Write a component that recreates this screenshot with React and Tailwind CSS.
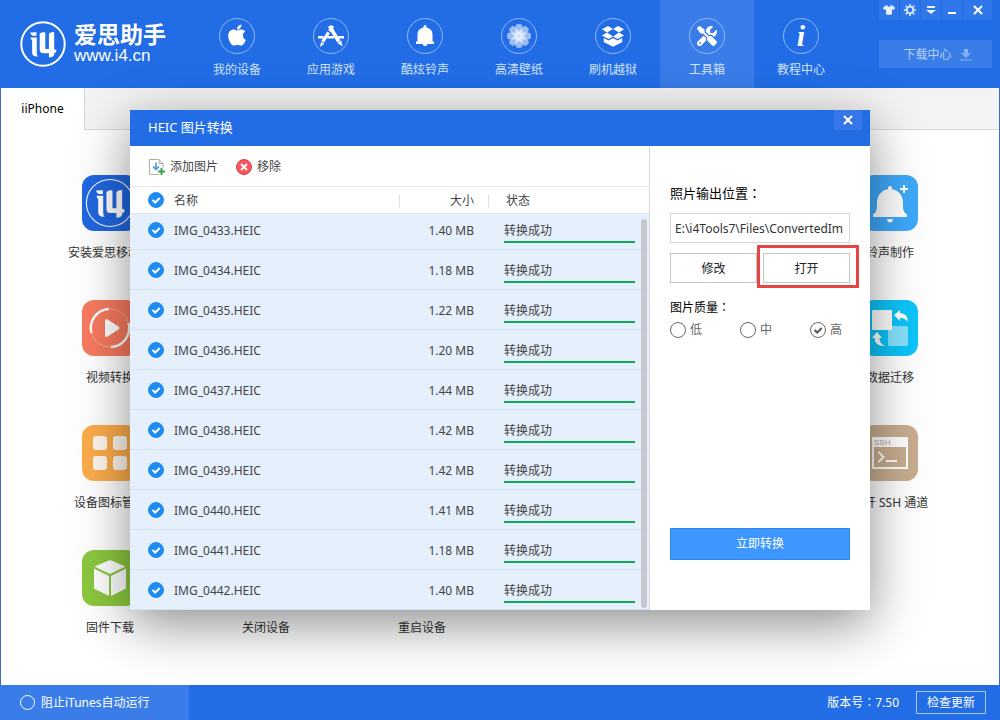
import React from "react";
import { FaApple } from "react-icons/fa";
import { FaScrewdriverWrench, FaShirt } from "react-icons/fa6";

function I4Logo({ className, ring = 6 }) {
  return (
    <svg viewBox="59 62 140 140" className={className} fill="#fff" aria-hidden="true">
      <circle cx="129" cy="132" r="66" fill="none" stroke="#fff" strokeWidth={ring} />
      <path d="M90 97L109 96V107H98Q91 104 90 97Z" />
      <path d="M91 112H110V160Q110 166 114 170Q96 172 96 157V121Q92 118 91 112Z" />
      <path d="M119 101Q125 95 136 97V147H147V101Q152 95 163 96V148L170 150L168 159H163V165Q160 173 147 173V160H130Q119 160 119 148Z" />
    </svg>
  );
}

function AppStoreIcon() {
  return (
    <svg viewBox="0 0 26 22" className="h-[22px] w-[26px]" fill="none" stroke="#fff" aria-hidden="true">
      <path d="M11.500 1L20.800 16.500" strokeWidth="3.600" />
      <path d="M14.800 1L11.600 6.200M10.600 7.400L4.600 16.800" strokeWidth="3.200" />
      <path d="M0 12.300H5.400M9.400 12.300H16M20.200 12.300H26" strokeWidth="2.600" />
      <path d="M19.400 18L23.200 15.600L24.600 21.400ZM3 17L6.400 19L2 21.800Z" fill="#fff" stroke="none" />
    </svg>
  );
}

function BellIcon() {
  return (
    <svg viewBox="0 0 20 22" className="h-[22px] w-5" fill="#fff" aria-hidden="true">
      <path d="M8.500 1.500a1.500 1.500 0 0 1 3 0V2.600c4 .8 6 3.600 6 7.400V16.400H19V19H12.400a2.400 2 0 0 1-4.800 0H1V16.400H2.500V10c0-3.800 2-6.600 6-7.400Z" />
    </svg>
  );
}

function FlowerIcon() {
  return (
    <svg viewBox="-13 -13 26 26" className="h-[26px] w-[26px]" fill="#fff" aria-hidden="true">
      {[0, 45, 90, 135, 180, 225, 270, 315].map((a) => (
        <rect key={a} x="-3.500" y="-12" width="7" height="11.500" rx="3" opacity="0.55" transform={`rotate(${a})`} />
      ))}
      <circle r="1.300" fill="#bcd7fb" />
    </svg>
  );
}

function BoxIcon() {
  return (
    <svg viewBox="0 0 24 22" className="h-[22px] w-6" fill="#fff" aria-hidden="true">
      <path d="M7 1L12 4L6 7.500L1 4.300ZM17 1L23 4.300L18 7.500L12 4ZM6 7.500L12 11.500L7.500 14L1 10.600ZM18 7.500L23 10.600L16.500 14L12 11.500Z" />
      <path d="M2.800 13L7.600 15.500L12 13L16.400 15.500L21.200 13V17L12 21.800L2.800 17Z" />
      <path d="M12 4.800L17 7.600L12 10.700L7 7.600Z" fill="#226de6" />
    </svg>
  );
}

function CloseIcon({ className }) {
  return (
    <svg viewBox="0 0 10 10" className={className} stroke="#fff" strokeWidth="2" aria-hidden="true">
      <path d="M1 1L9 9M9 1L1 9" />
    </svg>
  );
}

const nav = [
  { label: "我的设备", icon: <FaApple className="mb-0.5 size-6" /> },
  { label: "应用游戏", icon: <AppStoreIcon /> },
  { label: "酷炫铃声", icon: <BellIcon /> },
  { label: "高清壁纸", icon: <FlowerIcon /> },
  { label: "刷机越狱", icon: <BoxIcon /> },
  { label: "工具箱", icon: <FaScrewdriverWrench className="size-5" />, active: true },
  {
    label: "教程中心",
    icon: <span className="font-['Liberation_Serif',serif] text-[30px] leading-none font-bold italic">i</span>,
  },
];

const windowButtons = [
  { label: "换肤", width: "w-5", icon: <FaShirt className="size-3" /> },
  {
    label: "设置",
    width: "w-5",
    icon: (
      <svg viewBox="-7 -7 14 14" className="size-3.5" fill="none" stroke="#e6f0fe" aria-hidden="true">
        <circle r="3.200" strokeWidth="1.600" />
        <path d="M0-4V-6M0 4V6M-4 0H-6M4 0H6M2.800 2.800L4.300 4.300M-2.800-2.800L-4.300-4.300M2.800-2.800L4.300-4.300M-2.800 2.800L-4.300 4.300" strokeWidth="1.600" />
      </svg>
    ),
  },
  {
    label: "菜单",
    width: "w-5",
    icon: (
      <svg viewBox="0 0 10 8" className="h-2 w-2.5" fill="#e6f0fe" aria-hidden="true">
        <path d="M1 0H9V2H1ZM0 4H10L5 8Z" />
      </svg>
    ),
  },
  { label: "最小化", width: "w-5", icon: <span className="mt-1.5 h-0.5 w-2 bg-white" /> },
  { label: "关闭", width: "w-[29px]", icon: <CloseIcon className="size-2.5" /> },
];

const tileSvg = "h-14 w-14";
const tools = [
  {
    label: "安装爱思移动端",
    place: "col-start-1 row-start-1",
    bg: "bg-[#2067e0]",
    icon: <I4Logo className="size-[50px]" ring={3} />,
  },
  {
    label: "铃声制作",
    place: "col-start-6 row-start-1",
    bg: "bg-[#3fa9fb]",
    icon: (
      <svg viewBox="0 0 56 56" className={tileSvg} fill="#fff" aria-hidden="true">
        <path d="M26 13a2 2 0 0 1 4 0v1.300c7 1 11 6.500 11 13.700 0 6 0 9 4 11.500V42H11v-2.500c4-2.500 4-5.500 4-11.500 0-7.200 4-12.700 11-13.700ZM25 44h6q-.5 3.500-3 3.500t-3-3.500Z" />
        <path d="M38 14h8M42 10v8" stroke="#fff" strokeWidth="2" />
      </svg>
    ),
  },
  {
    label: "视频转换",
    place: "col-start-1 row-start-2",
    bg: "bg-[#f87a5f]",
    icon: (
      <svg viewBox="0 0 56 56" className={tileSvg} fill="none" stroke="#fff" aria-hidden="true">
        <circle cx="28" cy="28" r="19" strokeWidth="0.600" opacity="0.600" />
        <path d="M9.500 33A19 19 0 0 1 27 9M46.500 23A19 19 0 0 1 29 47" strokeWidth="2.400" />
        <path d="M24.500 20.500L36 28L24.500 35.500Z" fill="#fff" strokeWidth="3" strokeLinejoin="round" />
      </svg>
    ),
  },
  {
    label: "数据迁移",
    place: "col-start-6 row-start-2",
    bg: "bg-[#0cc5fa]",
    icon: (
      <svg viewBox="0 0 56 56" className={tileSvg} fill="#fff" aria-hidden="true">
        <rect x="26" y="26" width="20" height="20" rx="1" opacity="0.500" />
        <rect x="10" y="10" width="20" height="20" rx="1" />
        <path d="M32 15L38 10V13Q46 13.500 46 22Q43 17.500 38 18V21Z" />
        <path d="M15 32L20 38H17.500Q17 43 23 46Q13 46.500 12.500 38H10Z" />
      </svg>
    ),
  },
  {
    label: "设备图标管理",
    place: "col-start-1 row-start-3",
    bg: "bg-[#fcac4b]",
    icon: (
      <svg viewBox="0 0 56 56" className={tileSvg} fill="#fff" opacity="0.900" aria-hidden="true">
        <rect x="11" y="11" width="14" height="14" rx="3" />
        <rect x="31" y="11" width="14" height="14" rx="3" />
        <rect x="11" y="31" width="14" height="14" rx="3" />
        <rect x="31" y="31" width="14" height="14" rx="3" />
      </svg>
    ),
  },
  {
    label: "打开 SSH 通道",
    place: "col-start-6 row-start-3",
    bg: "bg-[#c8ae90]",
    icon: (
      <svg viewBox="0 0 56 56" className={tileSvg} fill="none" stroke="#fff" aria-hidden="true">
        <rect x="11" y="13" width="34" height="30" strokeWidth="2" />
        <path d="M11 17H45" strokeWidth="10" />
        <path d="M16.500 27L21.500 32L16.500 37M24 36H35" strokeWidth="1.800" />
        <text x="12" y="20" fontSize="8" fill="#b8a68f" stroke="none" fontFamily="Liberation Sans, sans-serif">SSH</text>
      </svg>
    ),
  },
  {
    label: "固件下载",
    place: "col-start-1 row-start-4",
    bg: "bg-[#8bc83f]",
    icon: (
      <svg viewBox="0 0 56 56" className={tileSvg} fill="#fff" aria-hidden="true">
        <path d="M28 10L43.500 16.500L28 24L12.500 16.500ZM12 18.500L27 26V46L12 38.500ZM44 18.500L29 26V46L44 38.500Z" />
      </svg>
    ),
  },
  { label: "关闭设备", place: "col-start-2 row-start-4", bg: "bg-[#f56b6b]", icon: null },
  { label: "重启设备", place: "col-start-3 row-start-4", bg: "bg-[#3fa9fb]", icon: null },
];

const files = [
  ["IMG_0433.HEIC", "1.40 MB"],
  ["IMG_0434.HEIC", "1.18 MB"],
  ["IMG_0435.HEIC", "1.22 MB"],
  ["IMG_0436.HEIC", "1.20 MB"],
  ["IMG_0437.HEIC", "1.44 MB"],
  ["IMG_0438.HEIC", "1.42 MB"],
  ["IMG_0439.HEIC", "1.42 MB"],
  ["IMG_0440.HEIC", "1.41 MB"],
  ["IMG_0441.HEIC", "1.18 MB"],
  ["IMG_0442.HEIC", "1.40 MB"],
];

function RoundCheck({ label }) {
  return (
    <span className="grid size-4 place-items-center">
      <input
        type="checkbox"
        defaultChecked
        aria-label={label}
        className="peer col-start-1 row-start-1 size-4 appearance-none rounded-full border border-[#1e8bf0] checked:bg-[#1e8bf0]"
      />
      <svg viewBox="0 0 16 16" className="pointer-events-none col-start-1 row-start-1 hidden size-4 peer-checked:block" fill="none" stroke="#fff" strokeWidth="2" aria-hidden="true">
        <path d="M4.500 8L7.200 10.500L11.700 6" />
      </svg>
    </span>
  );
}

function QualityOption({ label, checked }) {
  return (
    <label className="flex items-center gap-1 text-[12px] leading-4 text-[#666]">
      <span className="grid place-items-center">
        <input
          type="radio"
          name="quality"
          defaultChecked={checked}
          className="peer col-start-1 row-start-1 size-4 appearance-none rounded-full border border-[#666]"
        />
        <svg viewBox="0 0 16 16" className="pointer-events-none col-start-1 row-start-1 hidden size-4 peer-checked:block" fill="none" stroke="#555" strokeWidth="2" aria-hidden="true">
          <path d="M4.500 8L7.200 10.500L11.700 6" />
        </svg>
      </span>
      {label}
    </label>
  );
}

function Colon() {
  return <span className="font-['Noto_Sans_CJK_TC',sans-serif]">：</span>;
}

function Header() {
  return (
    <header className="flex h-[88px] bg-[#226de6] text-white">
      <div className="flex w-[190px] shrink-0 items-center gap-2 pl-5">
        <I4Logo className="size-[46px] shrink-0" />
        <div>
          <div className="text-[23px] leading-6 font-bold whitespace-nowrap">爱思助手</div>
          <div className="font-['Liberation_Sans',sans-serif] text-[17px] leading-5">www.i4.cn</div>
        </div>
      </div>
      <nav className="flex">
        {nav.map((n) => (
          <a
            key={n.label}
            href="#"
            className={`flex w-[94px] flex-col items-center gap-2 pt-[18px] text-[12px] leading-4 text-[#d3e4fd] ${n.active ? "bg-[#3a7de9]" : ""}`}
          >
            <span className="flex size-9 items-center justify-center rounded-full border border-[#8ebaf6] text-white">{n.icon}</span>
            {n.label}
          </a>
        ))}
      </nav>
      <div className="mr-2 ml-auto flex w-[113px] flex-col gap-5">
        <div className="flex gap-px">
          {windowButtons.map((b) => (
            <button key={b.label} type="button" aria-label={b.label} className={`flex h-5 items-center justify-center bg-[#2f76e8] text-[#e6f0fe] ${b.width}`}>
              {b.icon}
            </button>
          ))}
        </div>
        <button type="button" className="flex h-7 items-center justify-center gap-2 bg-[#3a7de9] pt-0.5 pl-1 text-[12px] text-[#b5d0f9]">
          下载中心
          <svg viewBox="0 0 12 12" className="size-3" fill="#86b0f3" aria-hidden="true">
            <path d="M4 0H8V4H11L6 9L1 4H4ZM0 10.500H12V11.500H0Z" />
          </svg>
        </button>
      </div>
    </header>
  );
}

function ConvertDialog() {
  return (
    <div role="dialog" aria-labelledby="dialog-title" className="absolute inset-x-[13%] top-[110px] bg-white shadow-[0_14px_50px_rgba(0,0,0,0.450)]">
      <div className="flex h-9 items-center justify-between bg-[#226de6] pr-2 pl-[18px] text-white">
        <h1 id="dialog-title" className="text-[13px]">HEIC 图片转换</h1>
        <button type="button" aria-label="关闭" className="flex h-5 w-7 items-center justify-center self-start bg-[#3577e8]">
          <CloseIcon className="size-2.5" />
        </button>
      </div>
      <div className="flex">
        <section className="relative min-w-0 flex-1 border-r border-[#d9d9d9]">
          <div className="flex h-10 items-center gap-[18px] pt-0.5 pl-[18px] text-[12px] text-[#444]">
            <button type="button" className="flex items-center gap-1">
              <svg viewBox="0 0 18 18" className="size-[18px]" fill="none" aria-hidden="true">
                <path d="M11 16.500H1.500V1.500H11L15 5.500V10" stroke="#b3aaa0" />
                <path d="M11 1.500V5.500H15" stroke="#b3aaa0" />
                <path d="M8 4.500V11M5 8.500L8 11.500L11 8.500" stroke="#4a90e2" strokeWidth="1.500" />
                <path d="M13.500 10V17M10 13.500H17" stroke="#3aa54a" strokeWidth="2" />
              </svg>
              添加图片
            </button>
            <button type="button" className="flex items-center gap-[5px]">
              <svg viewBox="0 0 16 16" className="size-4" aria-hidden="true">
                <circle cx="8" cy="8" r="7.500" fill="#f4595f" stroke="#e23c44" />
                <path d="M5 5L11 11M11 5L5 11" stroke="#fff" strokeWidth="1.800" />
              </svg>
              移除
            </button>
          </div>
          <table className="w-full table-fixed border-collapse text-[12px] leading-4 text-[#444]">
            <colgroup>
              <col className="w-11" />
              <col />
              <col className="w-[89px]" />
              <col className="w-40" />
            </colgroup>
            <thead>
              <tr className="h-[27px] border-y border-[#e5e7ea] text-left">
                <th className="p-0 pl-[18px]">
                  <RoundCheck label="全选" />
                </th>
                <th className="p-0 pt-0.5 font-normal">
                  <div className="border-r border-[#ddd] leading-3">名称</div>
                </th>
                <th className="p-0 pt-0.5 font-normal">
                  <div className="border-r border-[#ddd] pr-3.5 text-right leading-3">大小</div>
                </th>
                <th className="p-0 pt-0.5 pl-[17px] font-normal">状态</th>
              </tr>
            </thead>
            <tbody>
              {files.map(([name, size]) => (
                <tr key={name} className="h-10 border-b border-[#d6e3f2] bg-[#e6f0fc] align-bottom first:h-9">
                  <td className="p-0 pb-[11px] pl-[18px]">
                    <RoundCheck label={name} />
                  </td>
                  <td className="p-0 pb-2.5">{name}</td>
                  <td className="p-0 pr-[15px] pb-2.5 text-right">{size}</td>
                  <td className="p-0 pr-3.5 pb-1.5 pl-[15px]">
                    <div className="border-b-2 border-[#12a85c] pb-0.5">转换成功</div>
                  </td>
                </tr>
              ))}
            </tbody>
          </table>
          <div className="absolute top-[73px] right-0.5 bottom-0.5 w-1.5 rounded-full bg-[#c5c8cc]" />
        </section>
        <section className="flex w-[220px] shrink-0 flex-col px-5 pt-[38px] pb-[50px] text-[#222]">
          <label htmlFor="output" className="h-[18px] text-[13px] leading-[18px] text-black">
            照片输出位置<Colon />
          </label>
          <input id="output" readOnly defaultValue="E:\i4Tools7\Files\ConvertedImages" className="mt-[11px] h-[30px] w-full border border-[#d5d5d5] pr-1.5 pl-1 text-[12px] text-[#333]" />
          <div className="mt-2.5 grid grid-cols-2 gap-1.5 text-[12px]">
            <button type="button" className="h-[30px] border border-[#c6c6c6] bg-white pt-0.5">修改</button>
            <div className="relative">
              <button type="button" className="h-[30px] w-full border border-[#c6c6c6] bg-white pt-0.5">打开</button>
              <span className="pointer-events-none absolute -top-2 -right-[9px] -bottom-[5px] -left-1.5 border-3 border-[#e64545]" />
            </div>
          </div>
          <div className="mt-4 h-4 text-[12px] leading-4 text-black">
            图片质量<Colon />
          </div>
          <div className="mt-[7px] grid grid-cols-[70px_70px_auto]">
            <QualityOption label="低" />
            <QualityOption label="中" />
            <QualityOption label="高" checked />
          </div>
          <button type="button" className="mt-auto h-8 border border-[#2f86ee] bg-[#3d97ff] text-[12px] text-white">立即转换</button>
        </section>
      </div>
    </div>
  );
}

export default function App() {
  return (
    <div className="relative flex min-h-screen flex-col bg-white font-['Noto_Sans','Noto_Sans_CJK_SC',sans-serif]">
      <Header />
      <main className="flex-1 border-x border-[#3b6cc9]">
        <div className="flex h-[42px] border-b border-[#d8d8d8] bg-[#f3f3f3]">
          <button type="button" className="-mb-px h-[42px] w-[84px] border-r border-[#d8d8d8] bg-white text-[12px] text-black">iiPhone</button>
        </div>
        <div className="grid auto-rows-[125px] grid-cols-6 px-[31px] pt-[45px]">
          {tools.map((t) => (
            <a key={t.label} href="#" className={`flex flex-col items-center gap-3.5 text-[12px] leading-4 whitespace-nowrap text-[#333] ${t.place}`}>
              <span className={`flex size-14 items-center justify-center overflow-hidden rounded-xl ${t.bg}`}>{t.icon}</span>
              {t.label}
            </a>
          ))}
        </div>
      </main>
      <footer className="flex h-[35px] items-center bg-[#226de6] text-[12px] text-white">
        <label className="flex h-full w-[189px] items-center gap-1.5 bg-[#3a7de9] pl-5">
          <input type="checkbox" className="size-[15px] appearance-none rounded-full border border-white checked:bg-white" />
          阻止iTunes自动运行
        </label>
        <span className="ml-auto">
          版本号<Colon />7.50
        </span>
        <button type="button" className="mr-3.5 ml-[17px] h-[23px] w-[70px] border border-[#a9c8f8]">检查更新</button>
      </footer>
      <ConvertDialog />
    </div>
  );
}
